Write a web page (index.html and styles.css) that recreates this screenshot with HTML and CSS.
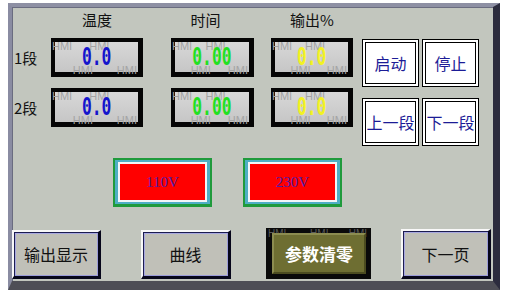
FILE: index.html
```html
<!DOCTYPE html>
<html>
<head>
<meta charset="utf-8">
<link rel="stylesheet" href="styles.css">
</head>
<body>
<div class="panel">
  <div class="top">
    <div class="grid-left">
      <div class="row head">
        <div class="lbl"></div>
        <div class="cell c1"><div class="htext w1">温度</div></div>
        <div class="cell c2"><div class="htext w2 shift">时间</div></div>
        <div class="cell c3"><div class="htext w3">输出%</div></div>
      </div>
      <div class="row disp-row">
        <div class="lbl">1段</div>
        <div class="cell c1"><div class="disp w1"><div class="wm"><span class="a">HMI</span><span class="b">HMI</span><span class="c">HMI</span><span class="d">HMI</span></div><span class="val blue">0.0</span></div></div>
        <div class="cell c2"><div class="disp w2"><div class="wm"><span class="a">HMI</span><span class="b">HMI</span><span class="c">HMI</span><span class="d">HMI</span></div><span class="val green">0.00</span></div></div>
        <div class="cell c3"><div class="disp w3"><div class="wm"><span class="a">HMI</span><span class="b">HMI</span><span class="c">HMI</span><span class="d">HMI</span></div><span class="val yellow">0.0</span></div></div>
      </div>
      <div class="row disp-row second">
        <div class="lbl">2段</div>
        <div class="cell c1"><div class="disp w1"><div class="wm"><span class="a">HMI</span><span class="b">HMI</span><span class="c">HMI</span><span class="d">HMI</span></div><span class="val blue">0.0</span></div></div>
        <div class="cell c2"><div class="disp w2"><div class="wm"><span class="a">HMI</span><span class="b">HMI</span><span class="c">HMI</span><span class="d">HMI</span></div><span class="val green">0.00</span></div></div>
        <div class="cell c3"><div class="disp w3"><div class="wm"><span class="a">HMI</span><span class="b">HMI</span><span class="c">HMI</span><span class="d">HMI</span></div><span class="val yellow">0.0</span></div></div>
      </div>
    </div>
    <div class="btn-grid">
      <div class="wbtn"><span>启动</span></div>
      <div class="wbtn"><span>停止</span></div>
      <div class="wbtn"><span>上一段</span></div>
      <div class="wbtn"><span>下一段</span></div>
    </div>
  </div>
  <div class="mid">
    <div class="vbtn"><div class="vin">110V</div></div>
    <div class="vbtn"><div class="vin">230V</div></div>
  </div>
  <div class="bottom">
    <div class="gbtn b1">输出显示</div>
    <div class="gbtn b2">曲线</div>
    <div class="obtn"><div class="wm"><span class="a">HMI</span><span class="b">HMI</span><span class="e">HMI</span></div><div class="oin">参数清零</div></div>
    <div class="gbtn b4">下一页</div>
  </div>
</div>
</body>
</html>
```

FILE: styles.css
```css
* { box-sizing: border-box; }
body {
  margin: 0;
  background: #ffffff;
  font-family: "Noto Sans CJK SC", "Noto Sans", sans-serif;
}
.panel {
  margin: 3px 0 0 8px;
  width: 492px;
  height: 287px;
  border-style: solid;
  border-width: 4px 7px 9px 4px;
  border-color: #8e90a4 #2c2c3e #4e4e56 #8a8ca2;
  background: #c2c6be;
  display: flex;
  flex-direction: column;
  box-shadow: inset 1px 1px 0 #6a6c80;
}
.top { display: flex; height: 139px; }
.grid-left { display: flex; flex-direction: column; width: 350px; }
.row { display: flex; }
.head { height: 31px; padding-top: 3px; }
.disp-row { height: 39px; align-items: center; }
.second { margin-top: 11px; }
.lbl {
  width: 39px;
  padding-left: 2px;
  font-size: 15px;
  line-height: 18px;
  color: #111;
}
.c1 { width: 120px; }
.c2 { width: 100px; }
.c3 { width: 91px; }
.w1 { width: 92px; }
.w2 { width: 83px; }
.w3 { width: 82px; }
.htext {
  text-align: center;
  font-size: 15px;
  line-height: 20px;
  color: #111;
}
.shift { padding-right: 14px; }
.disp {
  position: relative;
  height: 39px;
  background: linear-gradient(#d8d8d8, #cdcdcd 60%, #c6c6c6);
  border-style: solid;
  border-color: #050505;
  border-width: 4px 5px 5px 4px;
  display: flex;
  align-items: center;
  justify-content: center;
}
.wm {
  position: absolute;
  inset: -4px;
  font-family: "Liberation Sans", sans-serif;
  font-size: 11px;
  color: #a4a4a4;
  line-height: 11px;
}
.wm span { position: absolute; }
.wm .a { left: 1px; top: 3px; }
.wm .b { left: 42%; top: 3px; }
.wm .c { left: 24%; bottom: 0px; }
.wm .d { right: 5px; bottom: 0px; }
.val {
  position: relative;
  display: inline-block;
  font-family: "DejaVu Sans Mono", monospace;
  font-weight: bold;
  font-size: 24px;
  line-height: 26px;
  transform: scaleX(0.68);
}
.blue { color: #1414cc; }
.green { color: #22e022; }
.yellow { color: #f2f222; }
.btn-grid {
  margin-top: 32px;
  display: grid;
  grid-template-columns: 57px 57px;
  grid-template-rows: 48px 48px;
  column-gap: 3px;
  row-gap: 11px;
}
.wbtn {
  border: 1px solid #000;
  background: #fff;
  padding: 2px;
  display: flex;
}
.wbtn span {
  flex: 1;
  border: 1px solid #000;
  display: flex;
  align-items: center;
  justify-content: center;
  font-size: 16px;
  color: #1c1c96;
  white-space: nowrap;
}
.mid {
  margin-top: 12px;
  padding-left: 101px;
  display: flex;
  gap: 31px;
}
.vbtn {
  width: 99px;
  height: 49px;
  border-style: solid;
  border-color: #1f9a3c;
  border-width: 2px 2px 3px 2px;
  background: #4eaec4;
  padding: 2px 3px 2px 3px;
  display: flex;
}
.vin {
  flex: 1;
  border: 2px solid #f2f6f8;
  background: #ff0000;
  color: #4e1ea8;
  font-family: "Liberation Serif", serif;
  font-size: 15px;
  display: flex;
  align-items: center;
  justify-content: center;
}
.bottom {
  margin-top: 21px;
  display: flex;
  align-items: flex-end;
}
.gbtn {
  height: 49px;
  border-style: solid;
  border-width: 2px 3px 3px 2px;
  border-color: #f8f8f8 #06061a #06061a #f8f8f8;
  background: #c0c0b8;
  box-shadow: inset 1px 1px 0 #1c1c50, inset -1px -1px 0 #9a9ad8, inset 2px 2px 0 #a8a8e0;
  display: flex;
  align-items: center;
  justify-content: center;
  font-size: 16px;
  color: #111;
}
.b1 { width: 89px; }
.b2 { width: 90px; margin-left: 40px; }
.b4 { width: 90px; height: 50px; margin-left: 30px; }
.obtn {
  position: relative;
  width: 105px;
  height: 51px;
  margin-left: 35px;
  background: #0a0a0a;
  padding: 5px 5px 5px 6px;
  display: flex;
}
.obtn .wm { inset: 0; color: #5a5a5a; font-size: 10px; }
.obtn .wm .a { left: 2px; top: 0px; }
.obtn .wm .b { left: 42%; top: 0px; }
.obtn .wm .e { right: 4px; top: 0px; }
.oin {
  position: relative;
  flex: 1;
  background: #6e6e32;
  border-style: solid;
  border-width: 2px;
  border-color: #8c8c50 #4c4c20 #4c4c20 #8c8c50;
  display: flex;
  align-items: center;
  justify-content: center;
  color: #ffffff;
  font-weight: bold;
  font-size: 17px;
}
```
